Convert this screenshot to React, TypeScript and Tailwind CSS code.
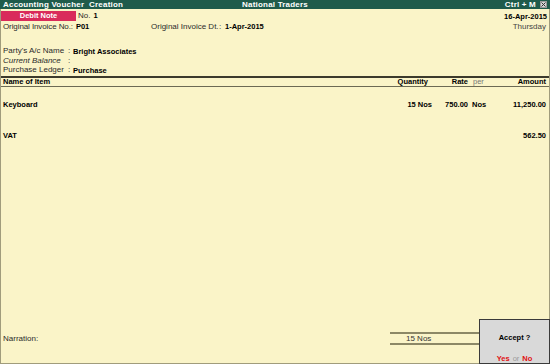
export default function App() {
  return (
    <div className="relative flex h-[364px] w-[550px] flex-col overflow-hidden whitespace-nowrap bg-[#faf4c8] font-['Liberation_Sans',Arial,sans-serif] text-[8px] leading-none text-[#2b2b2b]">
      {/* Title bar */}
      <div className="flex h-[9px] items-center bg-[#1f5b4b] px-[3px] text-[8px] font-bold text-white">
        <div className="flex-1 tracking-[0.2px]">Accounting Voucher&nbsp; Creation</div>
        <div className="flex-1 text-center tracking-[0.2px]">National Traders</div>
        <div className="flex flex-1 items-center justify-end gap-[4px]">
          <span className="tracking-[0.2px]">Ctrl + M</span>
          <span className="flex h-[7px] w-[7px] items-center justify-center border border-[#9a9a9a] bg-[#d4d4d4]">
            <svg width="5" height="5" viewBox="0 0 5 5">
              <path d="M0.5 0.5 L4.5 4.5 M4.5 0.5 L0.5 4.5" stroke="#333" strokeWidth="1" />
            </svg>
          </span>
        </div>
      </div>

      {/* Body */}
      <div className="flex flex-1 flex-col border-x border-b border-[#a09c7c]">
        <div className="mt-[2px] flex h-[10px] items-center pr-[2px]">
          <div className="flex h-[10px] w-[75px] items-center justify-center bg-[#d92b5b] text-[7.5px] font-bold text-white">
            Debit Note
          </div>
          <span className="ml-[2px]">No.</span>
          <span className="ml-[3px] text-[7.5px] font-bold text-black">1</span>
          <span className="ml-auto mt-[2px] text-[7.5px] font-bold text-black">16-Apr-2015</span>
        </div>
        <div className="flex h-[11px] items-center pl-[2px] pr-[3px]">
          <div className="flex w-[148px] items-center gap-[3px]">
            <span className="tracking-[-0.1px]">Original Invoice No.:</span>
            <span className="text-[7.5px] font-bold text-black">P01</span>
          </div>
          <span className="w-[68px]">Original Invoice Dt.</span>
          <span className="w-[6px]">:</span>
          <span className="text-[7.5px] font-bold text-black">1-Apr-2015</span>
          <span className="ml-auto text-[#444]">Thursday</span>
        </div>

        <div className="mt-[14.5px] flex flex-col pl-[2px]">
          <div className="flex h-[9.5px] items-center">
            <span className="w-[65px]">Party's A/c Name</span>
            <span className="w-[5px]">:</span>
            <span className="text-[7.5px] font-bold text-black">Bright Associates</span>
          </div>
          <div className="flex h-[9.5px] items-center">
            <span className="w-[65px] italic">Current Balance</span>
            <span className="w-[5px]">:</span>
          </div>
          <div className="flex h-[9.5px] items-center">
            <span className="w-[65px]">Purchase Ledger</span>
            <span className="w-[5px]">:</span>
            <span className="text-[7.5px] font-bold text-black">Purchase</span>
          </div>
        </div>

        {/* Item table */}
        <div className="mt-[1px] grid h-[11px] grid-cols-[1fr_60px_36px_22px_56px] items-center border-t-2 border-b border-t-[#3c3a2c] border-b-[#6c6a54] pl-[2px] pr-[3px] text-[7.5px] font-bold text-black">
          <span>Name of Item</span>
          <span className="pr-[4px] text-right">Quantity</span>
          <span className="text-right">Rate</span>
          <span className="pl-[5px] text-[7.5px] font-normal text-[#777]">per</span>
          <span className="text-right">Amount</span>
        </div>

        <div className="mt-[13px] grid h-[10px] grid-cols-[1fr_60px_36px_22px_56px] items-center pl-[2px] pr-[3px] text-[7.5px] font-bold text-black">
          <span>Keyboard</span>
          <span className="text-right">15 Nos</span>
          <span className="text-right">750.00</span>
          <span className="pl-[4px]">Nos</span>
          <span className="text-right">11,250.00</span>
        </div>

        <div className="mt-[21px] flex h-[10px] items-center justify-between pl-[2px] pr-[3px] text-[7.5px] font-bold text-black">
          <span>VAT</span>
          <span>562.50</span>
        </div>

        <div className="flex-1" />

        <div className="mb-[18px] flex h-[13px] items-center pl-[2px]">
          <span>Narration:</span>
          <div className="ml-auto mr-[70px] flex h-[13px] w-[89px] items-center border-y-2 border-[#8c8866] pl-[16px] text-[#333]">
            15 Nos
          </div>
        </div>
      </div>

      {/* Accept dialog */}
      <div className="absolute bottom-0 right-0 flex h-[45px] w-[71px] flex-col items-center border border-[#3a3a3a] bg-[#d9d9d9] pt-[14px]">
        <span className="text-[7.5px] font-bold text-black">Accept ?</span>
        <div className="mt-[13px] flex items-center gap-[3px] text-[7.5px]">
          <span className="font-bold text-[#e01010]">Yes</span>
          <span className="text-[#9a9a9a]">or</span>
          <span className="font-bold text-[#e01010]">No</span>
        </div>
      </div>
    </div>
  );
}
